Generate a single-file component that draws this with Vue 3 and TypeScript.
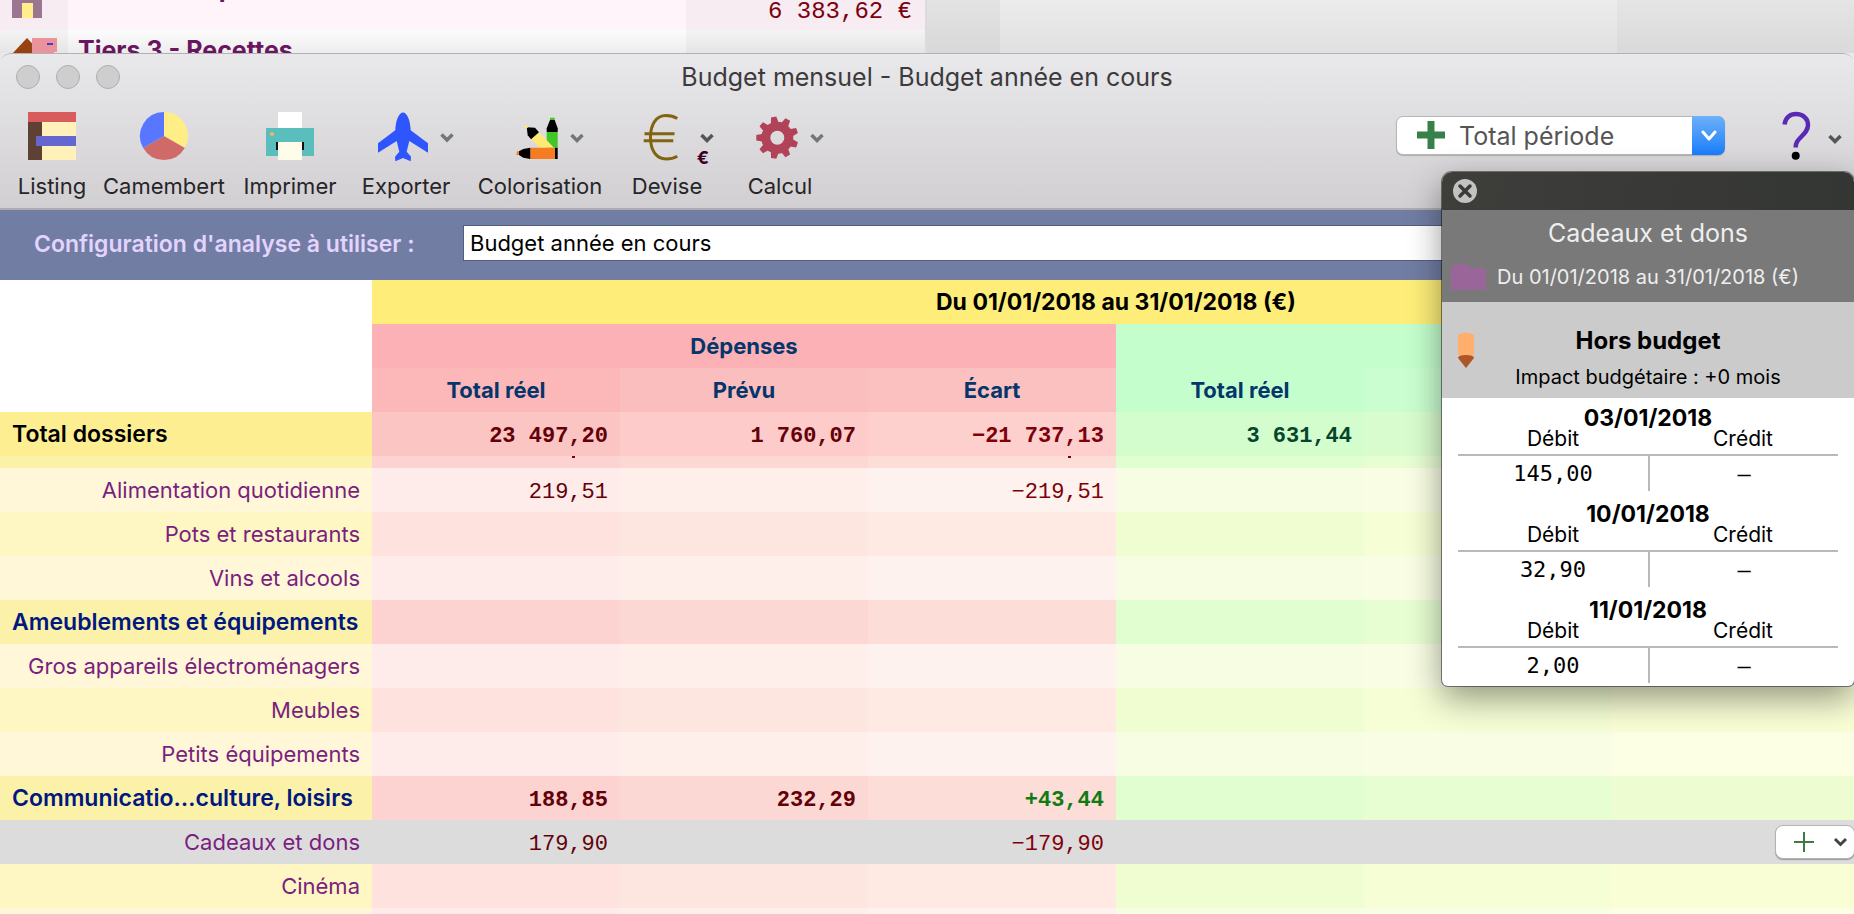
<script setup lang="ts">
import { ref } from 'vue'

type Tone = 'total' | 'group' | 'light' | 'mid' | 'selected'

interface Row {
  name: string
  tone: Tone
  bold?: boolean
  spent?: string
  planned?: string
  gap?: string
  income?: string
}

interface Entry {
  date: string
  debit: string
  credit: string
}

const config = ref('Budget année en cours')
const period = ref('Total période')

const rows: Row[] = [
  { name: 'Alimentation quotidienne', tone: 'light', spent: '219,51', gap: '−219,51' },
  { name: 'Pots et restaurants', tone: 'mid' },
  { name: 'Vins et alcools', tone: 'light' },
  { name: 'Ameublements et équipements', tone: 'group', bold: true },
  { name: 'Gros appareils électroménagers', tone: 'light' },
  { name: 'Meubles', tone: 'mid' },
  { name: 'Petits équipements', tone: 'light' },
  { name: 'Communicatio…culture, loisirs', tone: 'group', bold: true, spent: '188,85', planned: '232,29', gap: '+43,44' },
  { name: 'Cadeaux et dons', tone: 'selected', spent: '179,90', gap: '−179,90' },
  { name: 'Cinéma', tone: 'mid' },
  { name: '', tone: 'light' },
]

const entries: Entry[] = [
  { date: '03/01/2018', debit: '145,00', credit: '–' },
  { date: '10/01/2018', debit: '32,90', credit: '–' },
  { date: '11/01/2018', debit: '2,00', credit: '–' },
]

const teeth = Array.from({ length: 9 }, (_, i) => i * 40)
</script>

<template>
  <div class="desktop">
    <div class="ledger">
      <div class="ledger-row pink">
        <div class="ledger-icon">
          <svg width="30" height="50" viewBox="0 0 30 50"><path d="M0 12h30v38H0z" fill="#9c7590" /><path d="M10 35h11v15H10z" fill="#ffee8c" /></svg>
        </div>
        <div class="ledger-name">Tiers 2 - Dépenses</div>
        <div class="ledger-value"><span>6 383,62 €</span></div>
      </div>
      <div class="ledger-row">
        <div class="ledger-icon">
          <svg width="46" height="40" viewBox="0 0 46 40"><path d="M0 16 15 0l15 16v24H0z" fill="#964212" /><path d="M20 0h25v14h-3v26H20z" fill="#ea939c" /><path d="M35 5h6v2h-6z" fill="#4a3cc0" /></svg>
        </div>
        <div class="ledger-name">Tiers 3 - Recettes</div>
        <div class="ledger-value"></div>
      </div>
    </div>

    <main class="window">
      <header class="chrome">
        <div class="titlebar">
          <div class="lights">
            <button type="button" aria-label="Fermer"></button>
            <button type="button" aria-label="Réduire"></button>
            <button type="button" aria-label="Agrandir"></button>
          </div>
          <h1>Budget mensuel - Budget année en cours</h1>
        </div>

        <div class="toolbar">
          <nav class="tools">
            <button type="button" class="tool">
              <svg width="100" height="54" viewBox="0 0 100 54">
                <path d="M40 12h34v38H40z" fill="#fff1b9" /><path d="M26 12h14v38H26z" fill="#5e4034" />
                <path d="M26 2h48v10H26z" fill="#d95c5d" /><path d="M34 26h40v10H34z" fill="#6467cf" />
              </svg>
              <span>Listing</span>
            </button>
            <button type="button" class="tool">
              <svg width="100" height="54" viewBox="0 0 100 54">
                <path d="M50 26V2a24 24 0 0 1 20.8 36z" fill="#ffee86" />
                <path d="M50 26l20.8 12a24 24 0 0 1-41.6 0z" fill="#d06a69" />
                <path d="M50 26L29.2 38A24 24 0 0 1 50 2z" fill="#5876ff" />
              </svg>
              <span>Camembert</span>
            </button>
            <button type="button" class="tool">
              <svg width="100" height="54" viewBox="0 0 100 54">
                <path d="M38 2h24v16H38z" fill="#fff" /><path d="M26 18h48v28H26z" fill="#5abebd" />
                <circle cx="32" cy="24" r="2" fill="#ffae6b" /><path d="M36 32h28v8H36z" fill="#111" />
                <path d="M38 32h24v18H38z" fill="#fffce9" />
              </svg>
              <span>Imprimer</span>
            </button>
            <button type="button" class="tool">
              <svg width="100" height="54" viewBox="0 0 100 54">
                <path fill="#2f55ff" d="M47 2.5c-4 0-7.4 8-7.7 17.7L22 33.3v9.4L40.7 31l2.6 10.7-4.3 5 .3 4.6 7.7-3.4 7.7 3.4.3-4.6-4.3-5L53.3 31 72 42.7v-9.4L54.7 20.2C54.4 10.5 51 2.5 47 2.5z" />
                <path class="chev" d="M85.5 24.5l5.500 5.500 5.500-5.500" />
              </svg>
              <span>Exporter</span>
            </button>
            <button type="button" class="tool">
              <svg width="100" height="54" viewBox="0 0 100 54">
                <path d="M56.7 22h11v15.700h-11z" fill="#42c626" />
                <path d="M56.7 22v-3.700L60 10h4.700l3 8.300V22z" fill="#000" /><path d="M60 7.700h4.700V10H60z" fill="#42c626" />
                <path d="M49 22.300l15 15.400H50l-9-8.400z" fill="#ffe975" />
                <path d="M36.700 17.300l8.300.4 4 4.600-8 7-3.300-4z" fill="#000" /><path d="M34 16.300l3-1 1.300 1.700-2.300 2z" fill="#ffe975" />
                <path d="M40.300 37.700H65V49H40.300z" fill="#f47d24" /><path d="M65 37.700h2.700V49H65z" fill="#000" />
                <path d="M40.300 37.700l-7 1.300-4.300 2.300V45l4.300 2.700 7 1.300z" fill="#000" /><path d="M27 41.300h2V45h-2.700z" fill="#f47d24" />
                <path class="chev" d="M81.500 25l5.500 5.500 5.500-5.500" />
              </svg>
              <span>Colorisation</span>
            </button>
            <button type="button" class="tool">
              <svg width="100" height="54" viewBox="0 0 100 54">
                <path d="M60.300 8.500C57 6.500 53 5.500 49 5.500 39 5.500 33.500 14.500 33.500 27.300S39 49 49 49c4 0 8-.8 11.300-2.800M27.500 23.700h30M26.700 30.700h29.600" fill="none" stroke="#80640f" stroke-width="3" />
                <path class="chev strong" d="M84.500 25l5.500 5.500 5.500-5.500" />
                <text x="86" y="54" text-anchor="middle" class="mini">€</text>
              </svg>
              <span>Devise</span>
            </button>
            <button type="button" class="tool">
              <svg width="100" height="54" viewBox="0 0 100 54">
                <g transform="translate(47.300 27.700)" fill="#b24258">
                  <path v-for="a in teeth" :key="a" :transform="`rotate(${a})`" d="M-14-4l-7 1.300v5.400L-14 4z" />
                </g>
                <circle cx="47.300" cy="27.700" r="11.500" fill="none" stroke="#b24258" stroke-width="9" />
                <path class="chev" d="M81.500 25l5.500 5.500 5.500-5.500" />
              </svg>
              <span>Calcul</span>
            </button>
          </nav>

          <div class="tools-right">
            <div class="picker">
              <svg class="picker-plus" width="28" height="28" viewBox="0 0 28 28"><path d="M14 0v28M0 14h28" stroke="#38804a" stroke-width="7" /></svg>
              <select v-model="period" aria-label="Période">
                <option>Total période</option>
              </select>
              <span class="picker-arrow">
                <svg width="16" height="12" viewBox="0 0 16 12"><path d="M2 2l6 7 6-7" fill="none" stroke="#fff" stroke-width="3" stroke-linecap="round" stroke-linejoin="round" /></svg>
              </span>
            </div>
            <button type="button" class="help" aria-label="Aide">
              <svg width="80" height="54" viewBox="0 0 80 54">
                <path d="M14.500 14.500C15.500 7.500 20 4 26 4c7 0 12 4.500 12 11 0 5-3 8-6.500 11.500-4 4-5.800 6-5.800 11" fill="none" stroke="#5a2ab5" stroke-width="4.500" />
                <circle cx="25.700" cy="45.700" r="4" fill="#000" />
                <path class="chev strong" d="M59.500 26l5.500 5.500 5.500-5.500" />
              </svg>
            </button>
          </div>
        </div>
      </header>

      <form class="config" @submit.prevent>
        <label for="config">Configuration d'analyse à utiliser :</label>
        <input id="config" v-model="config" type="text" />
      </form>

      <table class="budget">
        <colgroup>
          <col class="name-col" />
          <col v-for="n in 6" :key="n" />
        </colgroup>
        <thead>
          <tr>
            <td rowspan="3" class="corner"></td>
            <th colspan="6" class="span-all" scope="colgroup">Du 01/01/2018 au 31/01/2018 (€)</th>
          </tr>
          <tr>
            <th colspan="3" class="out" scope="colgroup">Dépenses</th>
            <td colspan="3" class="in"></td>
          </tr>
          <tr class="heads">
            <th scope="col">Total réel</th>
            <th scope="col">Prévu</th>
            <th scope="col">Écart</th>
            <th scope="col">Total réel</th>
            <td></td>
            <td></td>
          </tr>
        </thead>
        <tbody>
          <tr class="total bold">
            <th scope="row">Total dossiers</th>
            <td class="num">23 497,20</td>
            <td class="num">1 760,07</td>
            <td class="num diff">−21 737,13</td>
            <td class="num income">3 631,44</td>
            <td></td>
            <td></td>
          </tr>
          <tr class="group scrolled">
            <th scope="row"></th>
            <td><div class="tail"></div></td>
            <td></td>
            <td><div class="tail"></div></td>
            <td></td>
            <td></td>
            <td></td>
          </tr>
          <tr v-for="(row, i) in rows" :key="i" :class="[row.tone, { bold: row.bold }]">
            <th scope="row">{{ row.name }}</th>
            <td class="num">{{ row.spent }}</td>
            <td class="num">{{ row.planned }}</td>
            <td class="num diff" :class="{ plus: row.gap?.startsWith('+') }">{{ row.gap }}</td>
            <td class="num income">{{ row.income }}</td>
            <td></td>
            <td class="action">
              <button v-if="row.tone === 'selected'" type="button" class="add" aria-label="Ajouter">
                <svg width="78" height="32" viewBox="0 0 78 32">
                  <path d="M28 6v20M18 16h20" stroke="#3f7a46" stroke-width="2" />
                  <path d="M59 13l5.500 5.500L70 13" fill="none" stroke="#444" stroke-width="3" />
                </svg>
              </button>
            </td>
          </tr>
        </tbody>
      </table>
    </main>

    <aside class="panel">
      <div class="panel-bar">
        <button type="button" aria-label="Fermer le détail">
          <svg width="24" height="24" viewBox="0 0 24 24"><circle cx="12" cy="12" r="12" fill="#c2c2c1" /><path d="M7 7l10 10M17 7L7 17" stroke="#3a3a38" stroke-width="3.500" stroke-linecap="round" /></svg>
        </button>
      </div>
      <div class="panel-head">
        <h2>Cadeaux et dons</h2>
        <div class="panel-line">
          <svg width="36" height="28" viewBox="0 0 36 28"><path d="M0 5l4-4h11l5 4h15v22H0z" fill="#9a6699" /></svg>
          <p>Du 01/01/2018 au 31/01/2018 (€)</p>
        </div>
      </div>
      <div class="panel-sub">
        <svg width="16" height="36" viewBox="0 0 16 36"><path d="M0 3q8-5 16 0v20H0z" fill="#ffae6b" /><path d="M0 26q0-3 8-3t8 3L8 36z" fill="#ae5625" /></svg>
        <div>
          <h3>Hors budget</h3>
          <p>Impact budgétaire : +0 mois</p>
        </div>
      </div>
      <div class="entries">
        <table v-for="e in entries" :key="e.date" class="entry">
          <caption>{{ e.date }}</caption>
          <thead>
            <tr><th scope="col">Débit</th><th scope="col">Crédit</th></tr>
          </thead>
          <tbody>
            <tr><td>{{ e.debit }}</td><td>{{ e.credit }}</td></tr>
          </tbody>
        </table>
      </div>
    </aside>
  </div>
</template>

<style>
body { margin: 0; }
</style>

<style scoped>
.desktop {
  position: relative;
  height: 100vh;
  overflow: hidden;
  display: flex;
  flex-direction: column;
  background: #e9e9e9;
  font-family: Inter, "Liberation Sans", sans-serif;
  color: #000;
}
button { border: 0; padding: 0; margin: 0; background: none; font: inherit; color: inherit; }
svg { display: block; flex: none; }
h1, h2, h3, p { margin: 0; font-weight: 400; }

/* Ledger behind the window */
.ledger {
  flex: none;
  height: 53px;
  overflow: hidden;
  display: flex;
  flex-direction: column;
  justify-content: flex-start;
  background:
    linear-gradient(rgba(0, 0, 0, 0), rgba(0, 0, 0, 0.05)),
    linear-gradient(90deg, #e3e3e3 1000px, #ececec 1000px, #ececec 1617px, #e5e5e5 1617px);
}
.ledger-row {
  flex: none;
  width: 925px;
  height: 62px;
  display: grid;
  grid-template-columns: 68px 1fr 239px;
  background: linear-gradient(#fcfcfc, #ececec 24px);
  border-right: 2px solid #dcdadc;
}
.ledger-row.pink { margin-top: -32px; background: #fff4fa; }
.ledger-icon { padding: 8px 0 0 12px; background: rgba(0, 0, 0, 0.03); }
.ledger-row.pink .ledger-icon { padding-top: 0; }
.ledger-name { padding-left: 10px; font-size: 25px; font-weight: 700; line-height: 40px; color: #6a1560; }
.ledger-value { display: flex; align-items: flex-end; justify-content: flex-end; padding: 0 13px 4px 0; background: rgba(0, 0, 0, 0.03); }
.ledger-value span { font: 24px/28px "Liberation Mono", monospace; color: #7c0010; }

/* Window chrome */
.window {
  flex: 1;
  display: flex;
  flex-direction: column;
  min-height: 0;
  border-radius: 10px 10px 0 0;
  overflow: hidden;
  background: #fff;
}
.chrome {
  flex: none;
  border-top: 1px solid #b2b1b3;
  border-bottom: 2px solid #aeacaf;
  border-radius: 10px 10px 0 0;
  background: linear-gradient(#e9e8ea, #d1cfd2);
}
.titlebar {
  display: grid;
  grid-template-columns: 160px 1fr 160px;
  align-items: center;
  height: 46px;
}
.lights { display: flex; gap: 16px; padding-left: 16px; }
.lights button { width: 24px; height: 24px; border: 1px solid #aeacae; border-radius: 50%; background: #cfcecf; }
.titlebar h1 { text-align: center; font-size: 25px; line-height: 30px; color: #3c3a3d; white-space: nowrap; }
.toolbar { display: flex; justify-content: space-between; height: 108px; padding-top: 10px; box-sizing: border-box; }
.tools { display: grid; grid-template-columns: 104px 120px 132px 100px 168px 86px 140px; align-items: start; }
.tool { display: flex; flex-direction: column; align-items: center; gap: 8px; font-size: 22px; line-height: 28px; color: #262527; white-space: nowrap; }
.tool svg { margin: 0 -10px; }
.chev { fill: none; stroke: #767577; stroke-width: 3.5; }
.chev.strong { stroke: #555456; }
.mini { font: 700 18px Inter, sans-serif; fill: #3a0020; }
.tools-right { display: flex; align-items: flex-start; gap: 45px; padding-right: 4px; }
.picker { position: relative; display: flex; width: 329px; height: 39px; margin-top: 6px; }
.picker select {
  flex: 1;
  appearance: none;
  padding: 0 40px 0 62px;
  border: 1px solid #b7b6b8;
  border-radius: 7px;
  background: #fff;
  box-shadow: 0 1px 1px rgba(0, 0, 0, 0.2);
  font: 25px Inter, sans-serif;
  color: #555;
}
.picker-plus { position: absolute; left: 21px; top: 5px; }
.picker-arrow {
  position: absolute;
  top: 0;
  right: 0;
  bottom: 0;
  width: 33px;
  display: flex;
  align-items: center;
  justify-content: center;
  border-radius: 0 7px 7px 0;
  background: linear-gradient(#6db1f9, #1a7dfb);
  pointer-events: none;
}

/* Analysis selector */
.config { flex: none; display: flex; align-items: flex-start; height: 70px; padding: 15px 34px 0 34px; box-sizing: border-box; background: #717da2; }
.config label { flex: none; width: 429px; font-size: 23px; font-weight: 600; line-height: 39px; color: #e2d4ff; }
.config input { flex: 1; height: 36px; box-sizing: border-box; padding: 0 6px; border: 1px solid #535d82; background: #fff; font: 22px Inter, sans-serif; color: #000; }

/* Budget grid */
.budget { width: calc(100% + 6px); table-layout: fixed; border-collapse: collapse; font-size: 22px; line-height: 28px; }
.name-col { width: 372px; }
.budget tr { height: 44px; }
.budget th, .budget td { padding: 0 12px; height: 44px; box-sizing: border-box; }
.budget thead th { font-size: 22px; font-weight: 700; color: #04356b; background: #c5fecd; }
.budget thead td { background: #cafed0; }
.budget thead td.corner { background: #fff; }
.budget thead td.in { background: #c4fecc; }
.budget thead th.span-all { background: #feee79; color: #000; font-size: 23px; }
.budget thead th.out { background: #fbb1b5; }
.budget .heads th:nth-child(1) { background: #fcb7b9; }
.budget .heads th:nth-child(2) { background: #fbbebf; }
.budget .heads th:nth-child(3) { background: #fbc1c1; }
.budget tbody th { text-align: right; font-weight: 400; color: #7a1f80; white-space: nowrap; }
.budget tbody .bold th { text-align: left; font-size: 23px; font-weight: 600; color: #00187f; }
.budget tbody .total th { color: #000; }
.budget .num { padding-top: 5px; text-align: right; font-family: "Liberation Mono", monospace; color: #640008; white-space: nowrap; }
.bold .num { font-weight: 700; }
.budget .diff { color: #7f000a; }
.budget .plus { color: #127a12; }
.budget .income { color: #05452c; }

.total > * { background: #fdef91; }
.total > :nth-child(2) { background: #fbc5c4; }
.total > :nth-child(3) { background: #fccbca; }
.total > :nth-child(4) { background: #fdd0ce; }
.total > :nth-child(5) { background: #d3fdcd; }
.total > :nth-child(n + 6) { background: #d9fcce; }
.group > * { background: #fcf1a9; }
.group > :nth-child(2) { background: #fcd3d1; }
.group > :nth-child(3) { background: #fcd8d4; }
.group > :nth-child(4) { background: #fdddd8; }
.group > :nth-child(5) { background: #e1fed0; }
.group > :nth-child(6) { background: #e7fdd2; }
.group > :nth-child(7) { background: #eefdd1; }
.light > * { background: #fff7d8; }
.light > :nth-child(2) { background: #feecea; }
.light > :nth-child(3) { background: #feefeb; }
.light > :nth-child(4) { background: #fef2ee; }
.light > :nth-child(5) { background: #f6fde3; }
.light > :nth-child(6) { background: #f8fde3; }
.light > :nth-child(7) { background: #fcffe3; }
.mid > * { background: #fef6c3; }
.mid > :nth-child(2) { background: #fde2dd; }
.mid > :nth-child(3) { background: #fde6df; }
.mid > :nth-child(4) { background: #feeae2; }
.mid > :nth-child(5) { background: #effdd1; }
.mid > :nth-child(6) { background: #f5fed5; }
.mid > :nth-child(7) { background: #f9fed5; }
.selected > * { background: #dcdcdc; }

.budget tr.scrolled, .budget tr.scrolled > * { height: 12px; vertical-align: top; }
.tail { width: 3px; height: 2px; margin: 0 33px 0 auto; background: #7f000a; }
.budget td.action { padding: 0 5px 0 0; }
.add { display: block; margin-left: auto; border: 1px solid #b4b4b4; border-radius: 8px; background: #fff; box-shadow: 0 1px 1px rgba(0, 0, 0, 0.3); }

/* Floating detail */
.panel {
  position: absolute;
  top: 172px;
  right: 0;
  width: 412px;
  border-radius: 10px 10px 6px 6px;
  overflow: hidden;
  background: #fff;
  box-shadow: 0 0 0 1px rgba(0, 0, 0, 0.45), 0 12px 34px rgba(0, 0, 0, 0.42);
}
.panel-bar { display: flex; align-items: center; height: 38px; padding-left: 11px; background: linear-gradient(100deg, #3e3e3b, #343634); }
.panel-head { height: 92px; padding-top: 8px; box-sizing: border-box; background: #797979; color: #eee; text-align: center; }
.panel-head h2 { font-size: 25px; line-height: 30px; }
.panel-line { display: grid; grid-template-columns: 40px 1fr 40px; align-items: center; padding: 0 9px; margin-top: 15px; }
.panel-line p { font-size: 20px; line-height: 28px; white-space: nowrap; }
.panel-sub { display: grid; grid-template-columns: 40px 1fr 40px; align-items: center; height: 96px; padding: 0 16px; box-sizing: border-box; background: #cbcbcb; text-align: center; }
.panel-sub > div { padding-top: 16px; white-space: nowrap; }
.panel-sub h3 { font-size: 24px; font-weight: 700; line-height: 38px; }
.panel-sub p { font-size: 20px; line-height: 34px; }
.entries { padding: 0 16px; }
.entry { width: 100%; table-layout: fixed; border-collapse: separate; border-spacing: 0; margin-bottom: 3px; }
.entry caption { padding-top: 10px; font-size: 23px; font-weight: 700; line-height: 20px; }
.entry th { padding: 1px 0 5px; border-bottom: 2px solid #b9b9b9; font-size: 21px; font-weight: 400; line-height: 20px; }
.entry td { padding: 0; height: 35px; box-sizing: border-box; text-align: center; font: 22px/34px "DejaVu Sans Mono", monospace; }
.entry td:last-child { border-left: 2px solid #b9b9b9; }
</style>
